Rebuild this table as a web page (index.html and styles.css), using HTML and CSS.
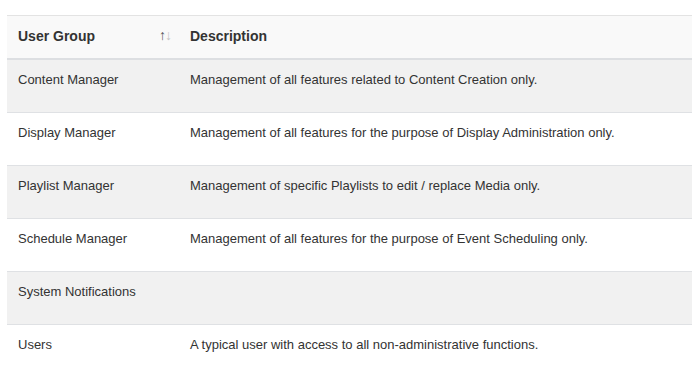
FILE: index.html
```html
<!DOCTYPE html>
<html lang="en">
<head>
  <meta charset="UTF-8">
  <title>User Groups</title>
  <link rel="stylesheet" href="styles.css">
</head>
<body>
  <div class="wrapper">
    <table class="groups">
      <colgroup>
        <col class="col-group">
        <col>
      </colgroup>
      <thead>
        <tr>
          <th class="sortable">
            User Group
            <span class="sort-icons"><span class="up">↑</span><span class="down">↓</span></span>
          </th>
          <th>Description</th>
        </tr>
      </thead>
      <tbody>
        <tr>
          <td>Content Manager</td>
          <td>Management of all features related to Content Creation only.</td>
        </tr>
        <tr>
          <td>Display Manager</td>
          <td>Management of all features for the purpose of Display Administration only.</td>
        </tr>
        <tr>
          <td>Playlist Manager</td>
          <td>Management of specific Playlists to edit / replace Media only.</td>
        </tr>
        <tr>
          <td>Schedule Manager</td>
          <td>Management of all features for the purpose of Event Scheduling only.</td>
        </tr>
        <tr>
          <td>System Notifications</td>
          <td></td>
        </tr>
        <tr>
          <td>Users</td>
          <td>A typical user with access to all non-administrative functions.</td>
        </tr>
      </tbody>
    </table>
  </div>
</body>
</html>
```

FILE: styles.css
```css
body {
  margin: 0;
  font-family: "Liberation Sans", Arial, sans-serif;
  color: #333;
  background: #fff;
}
.wrapper {
  padding: 15px 1px 0 7px;
}
.groups {
  width: 100%;
  border-collapse: collapse;
  table-layout: fixed;
}
.col-group {
  width: 172px;
}
.groups th {
  text-align: left;
  font-size: 14px;
  font-weight: bold;
  line-height: 17px;
  padding: 12px 11px 13px;
  background: #f9f9f9;
  border-top: 1px solid #e3e3e3;
  border-bottom: 2px solid #dddfe2;
}
.sortable {
  position: relative;
}
.sort-icons {
  position: absolute;
  right: 9px;
  top: 12px;
  font-size: 14px;
  font-weight: normal;
  line-height: 14px;
  letter-spacing: -2px;
}
.sort-icons .up {
  color: #555;
}
.sort-icons .down {
  color: #c4c4c4;
  margin-left: 1px;
}
.groups td {
  font-size: 13px;
  line-height: 18px;
  padding: 11px 11px 23px;
  vertical-align: top;
  border-bottom: 1px solid #dfe1e4;
}
.groups tbody tr:nth-child(odd) td {
  background: #f1f1f1;
}
.groups tbody tr:last-child td {
  border-bottom: none;
}
```
